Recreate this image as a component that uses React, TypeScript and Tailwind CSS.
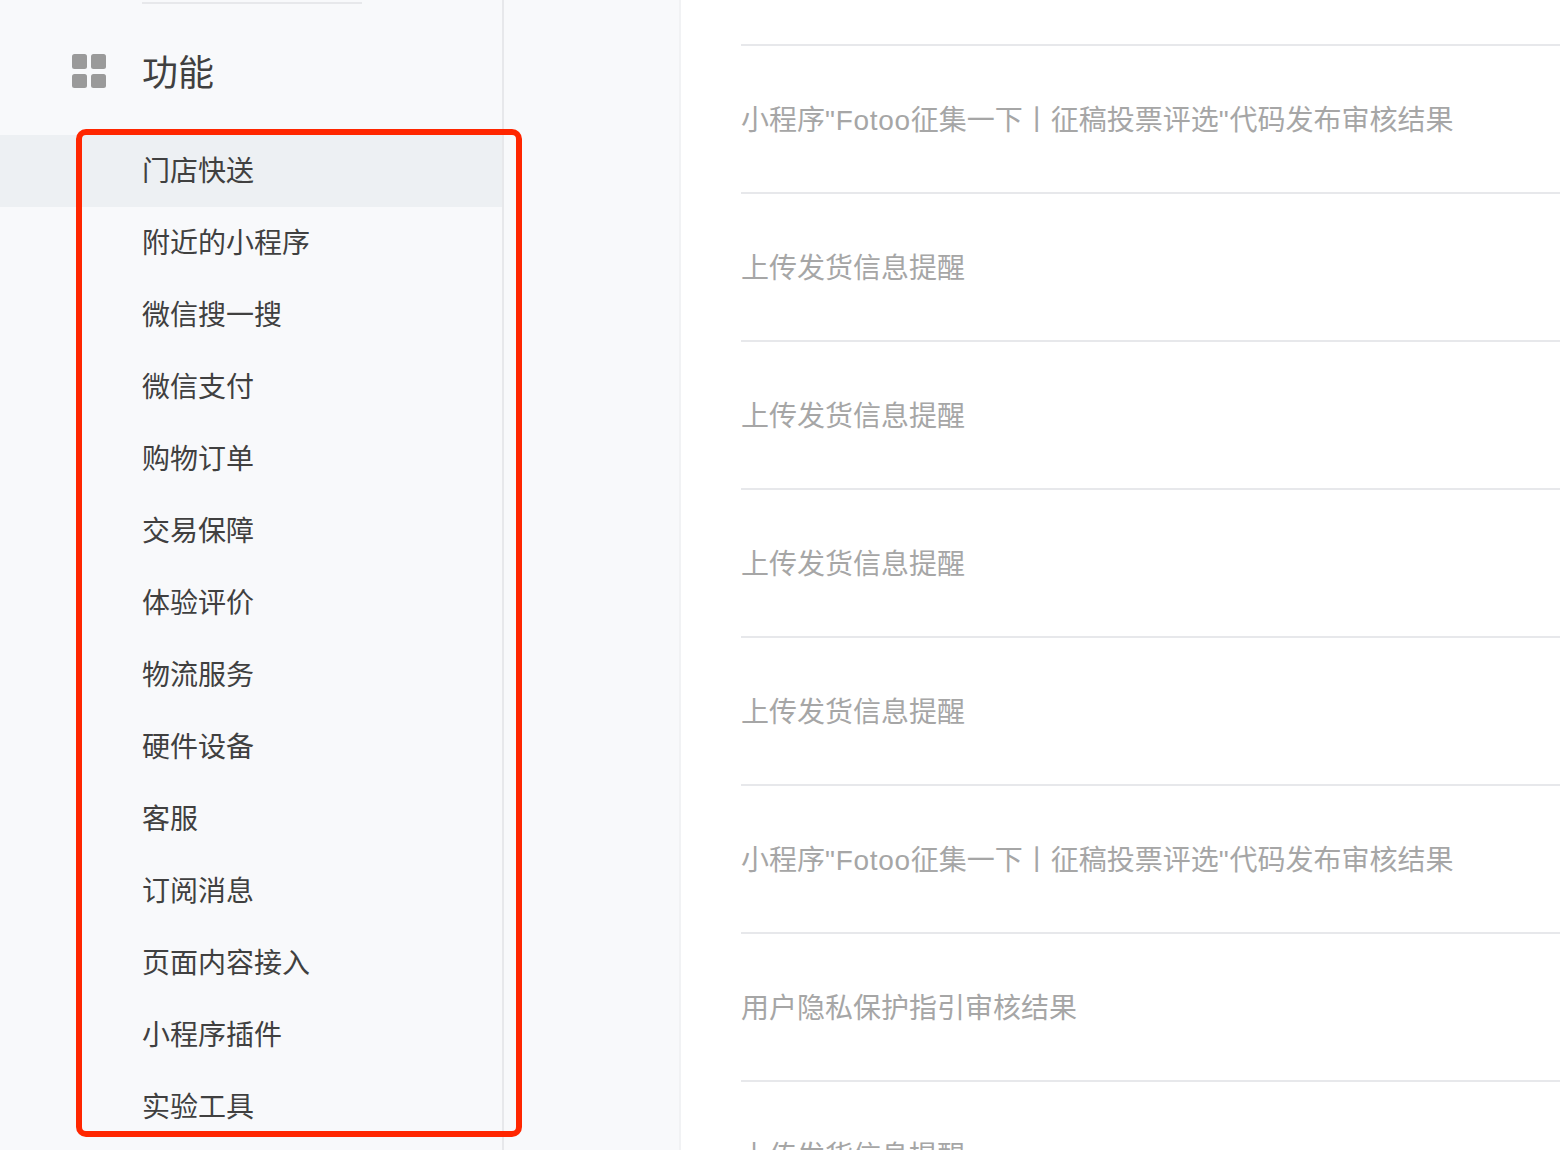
const MENU_ITEMS = [
  "门店快送",
  "附近的小程序",
  "微信搜一搜",
  "微信支付",
  "购物订单",
  "交易保障",
  "体验评价",
  "物流服务",
  "硬件设备",
  "客服",
  "订阅消息",
  "页面内容接入",
  "小程序插件",
  "实验工具",
];

const FOTOO = (
  <>
    小程序<span className="tracking-[0.7px]">"Fotoo</span>征集一下丨征稿投票评选
    <span className="tracking-[0.7px]">"</span>代码发布审核结果
  </>
);
const SHIP = "上传发货信息提醒";

const ROWS = [FOTOO, SHIP, SHIP, SHIP, SHIP, FOTOO, "用户隐私保护指引审核结果", SHIP];

const GridIcon = () => (
  <svg width="34" height="34" viewBox="0 0 34 34" fill="#9a9a9a">
    <rect x="0" y="0" width="15" height="15" rx="2.5" />
    <rect x="19" y="0" width="15" height="15" rx="2.5" />
    <rect x="0" y="20" width="15" height="14" rx="2.5" />
    <rect x="19" y="20" width="15" height="14" rx="2.5" />
  </svg>
);

const Sidebar = () => (
  <aside className="w-[504px] shrink-0 border-r-2 border-[#e7e8eb] bg-[#f8f9fb]">
    <div className="ml-[142px] mt-[2px] h-[2px] w-[220px] bg-[#e7e8eb]" />
    <div className="flex h-[131px] items-center gap-[36px] pl-[72px] pt-[2px]">
      <GridIcon />
      <span className="pt-[6px] text-[36px] leading-[48px] text-[#404040]">功能</span>
    </div>
    <ul>
      {MENU_ITEMS.map((item, i) => (
        <li
          key={item}
          className={
            i === 0
              ? "flex h-[72px] items-center bg-[#edf0f3] pl-[142px] pt-[2px] text-[28px] text-[#404040]"
              : "flex h-[72px] items-center pl-[142px] pt-[2px] text-[28px] text-[#404040]"
          }
        >
          {item}
        </li>
      ))}
    </ul>
  </aside>
);

export default function App() {
  return (
    <div
      className="relative flex h-[1150px] w-[1560px] overflow-hidden bg-white"
      style={{ fontFamily: '"Liberation Sans", "Noto Sans CJK SC", sans-serif' }}
    >
      <Sidebar />
      <div className="w-[177px] shrink-0 border-r-2 border-[#f1f2f4] bg-[#f8f9fb]" />
      <main className="min-w-0 flex-1 pl-[60px] pt-[44px]">
        {ROWS.map((row, i) => (
          <div
            key={i}
            className="flex h-[148px] items-center border-t-2 border-[#e7e8eb] pt-[4px] text-[28px] whitespace-pre text-[#a6a6a6]"
          >
            <span>{row}</span>
          </div>
        ))}
      </main>
      {/* Red highlight box */}
      <div className="absolute left-[76px] top-[129px] h-[1008px] w-[446px] rounded-[10px] border-[6px] border-[#ff2600]" />
    </div>
  );
}
